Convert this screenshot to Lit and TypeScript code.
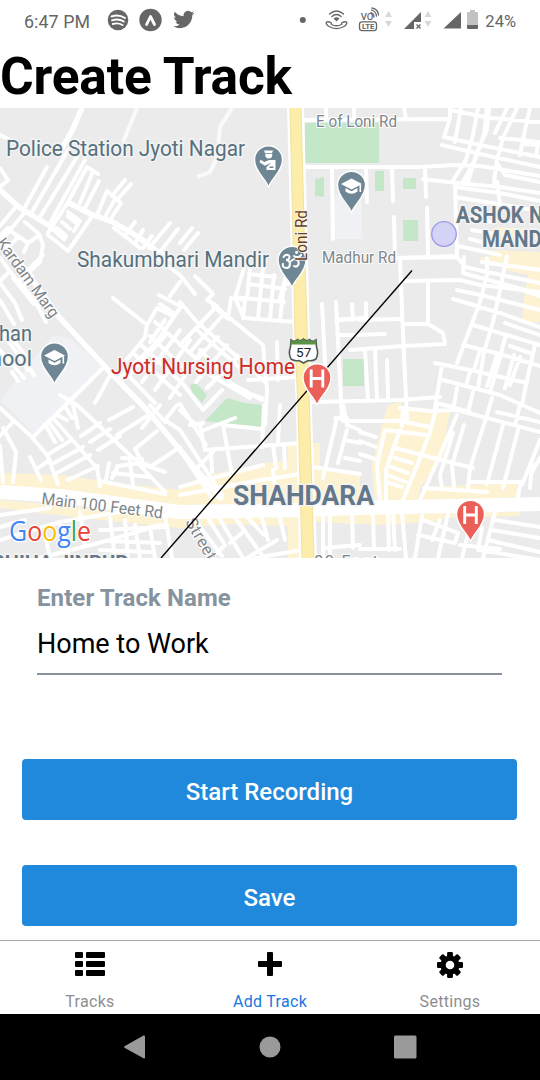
import { LitElement, html, svg, css } from "lit";
import { customElement } from "lit/decorators.js";

const MINOR_ROADS = [
  // north-west
  "M47 167L25 207M68 150L32 212M77 157L40 217M85 160L50 223M0 135L10 140M0 168L8 180M0 187L7 181",
  "M87 167L68 202L48 233M87 167L98 174M92 174L80 203M99 181L85 208M107 191L97 215M107 191L121 203L110 220M125 180L112 196M131 184L117 200M115 199L106 215",
  "M93 215L68 251L48 235M68 216L76 223M62 222L70 229M57 228L66 236M68 212L80 221L74 231M25 222L39 234L43 245L40 262L20 280M25 212L0 242M15 208L0 226",
  "M8 228L0 236M12 232L28 243L24 252M18 237L6 250M28 243L38 236M135 222L126 234M143 230L136 242M152 236L143 248M170 223L149 248M178 229L160 252M114 228L140 248",
  "M192 228L180 243M198 233L184 250",
  // north-east
  "M303 120L447 119M404 108L406 119M303 167L360 167L420 167L455 165L480 166L540 176M332 168L333 239M366 168L367 202M392 168L393 201M425 168L426 197M427 208L428 256M394 217L395 258L457 256L455 183",
  "M326 108L326 119M354 108L354 119",
  "M450 108L450 118L444 137L480 145L540 157M442 145L480 154L540 167M461 108L458 125L455 142M478 108L473 135L466 160L452 182M487 108L484 135L475 160L463 182M507 108L495 133M489 108L487 130L477 152L468 182M517 108L503 138L497 160L494 182M530 108L525 130L520 155M450 110L490 118L540 122M500 138L540 142M524 144L538 145L536 156",
  "M423 179L457 183L500 187L540 193M455 187L500 193L540 201M455 197L540 211M497 163L505 175L540 182M470 218L492 222M472 230L495 234M470 239L500 247M458 246L500 255M497 182L500 205",
  // west
  "M0 258L12 274L35 301L46 322M13 255L32 276M32 276L22 289M43 255L28 270M0 283L15 303L22 320M0 300L14 324M8 273L0 281M13 278L34 304M0 330L20 357L28 370M0 350L24 378M13 340L25 355M28 365L34 375M12 372L18 381",
  "M160 260L180 275M180 282L170 296M159 295L180 306M113 298L147 325L157 308L173 316M147 325L145 337L125 362M160 304L173 313M180 308L155 344L120 378M165 320L150 342M112 372L95 403M140 344L180 381M133 353L180 395M150 336L188 372M125 372L155 403M165 336L130 374M180 330L142 382M190 340L155 390M202 350L170 398M155 322L200 362",
  // centre
  "M180 275L195 294M195 276L213 294L207 300L217 306L180 345M180 302L197 322L258 375L265 382M215 306L263 345L267 390L265 425M223 315L190 352M243 318L245 300L234 298M231 298L228 319L213 306",
  "M244 268L235 298L244 318L295 322M250 268L247 298M263 268L258 318M274 275L270 319M285 278L280 319M235 297L284 302M248 284L285 289M249 274L275 277M285 284L297 283M277 342L278 380M248 380L297 377M285 280L280 298",
  "M197 330L240 368M205 372L250 398M183 384L203 410L222 390M200 350L232 384L262 400M218 337L185 372M227 345L196 382M238 356L207 388M262 398L240 390M180 410L196 425",
  // east
  "M400 258L457 257L465 267L487 272L540 283M405 281L460 280L480 285L540 292M428 282L428 323M403 324L428 324L443 333L445 344L403 346L350 350M360 320L400 319M340 320L365 318M352 335L385 334M366 303L366 320M400 258L402 310L407 420M322 304L326 380M336 302L342 420M336 320L362 318M340 335L358 335M352 304L353 320M365 350L368 400M375 350L377 400M387 360L388 398M312 402L400 400L440 397",
  "M487 258L487 275L480 302L457 363M507 256L500 290L493 322L484 352L478 388M463 273L540 294M457 290L485 296L540 310M453 299L500 313L540 327M473 325L540 345M463 345L500 354L540 366M435 363L475 371L527 383M443 380L500 395L540 413M442 365L435 408M535 345L527 380L522 405M505 338L498 365L490 392M520 357L510 385M514 355L505 388M497 355L487 386M480 350L474 370M470 372L466 386M505 323L540 335M510 346L530 353M457 388L454 405M473 392L468 412M492 398L486 418M437 403L470 412",
  "M464 257L463 273M482 262L540 270M510 286L540 296",
  // south-west
  "M0 408L30 435L47 455L58 484M103 368L33 437M60 395L77 405L133 458L165 492M53 418L97 468L100 486M47 455L70 441M52 464L83 447M57 473L90 455M68 480L98 466M72 400L78 428M66 408L72 418M45 424L55 442M48 421L62 440M57 415L67 420M81 436L100 423M90 442L110 429M98 450L120 436M109 420L133 407M117 435L150 414M135 449L157 431M135 449L144 465L165 472M153 465L180 447M142 428L160 405M150 405L165 422M177 405L165 420L180 430M0 436L13 422M3 428L16 452L13 482M0 446L3 482M30 457L41 480M38 468L50 460M117 466L143 463L153 467M113 473L150 477M109 463L106 480M118 466L112 478M122 458L142 459M130 462L133 485M100 481L165 494",
  // south centre
  "M180 430L222 495M180 404L206 445M200 425L205 450L300 443M223 425L232 475M211 450L212 472M204 430L235 418M264 405L262 447M280 405L278 443M273 445L276 468M284 445L285 468M180 495L262 480L300 474M180 487L205 480L263 465M213 452L195 470M223 425L262 429M273 470L275 487M180 450L212 498M190 425L203 423",
  "M208 518L225 545M218 516L243 558M234 516L264 558M248 518L264 535M262 518L268 540M280 518L285 540M277 540L247 558M302 550L255 558M230 543L243 532M217 553L225 545M195 520L222 556",
  "M337 418L323 478M313 467L360 474M343 405L347 425L360 430M338 463L347 430M360 443L345 440M345 458L360 461M335 418L347 418M323 514L323 558M330 514L330 558M352 514L353 548M323 548L360 545",
  // south-east
  "M343 421L400 421L430 427M437 405L430 432L420 458L403 500M457 415L440 455L420 500M400 408L430 411L457 410L540 432M488 412L470 468L468 488M503 425L487 484M518 430L503 488M540 440L522 485M395 448L473 468M385 430L377 465L380 500M385 430L427 435M400 430L386 470L386 500M453 433L440 475L442 488M464 425L452 465L454 488M424 488L487 492M470 482L520 482M395 458L412 463M391 467L408 473M388 475L406 482M386 482L402 487M360 441L376 447M360 454L375 459M532 464L530 488M540 458L532 472M360 432L376 437M497 412L540 422M520 405L515 425M403 410L402 426M520 485L518 497",
  "M402 514L406 558M422 516L415 558M448 514L438 558M495 512L483 558M423 520L458 533L455 543L418 535M440 520L432 540M495 520L540 527M492 530L540 538M488 540L540 552M480 550L540 560M460 545L500 549M373 514L374 548M388 514L389 550M393 514L395 550M360 549L400 549M482 528L478 550M467 538L462 558",
  // south-west corner
  "M0 515L50 508M0 540L60 522L120 512M40 558L110 540L160 525M110 518L115 558M125 520L128 558M135 525L140 558M150 527L155 558M100 530L165 527M108 541L160 543M100 550L150 552M60 524L70 558M165 515L172 558M150 527L165 525M0 527L25 520M80 512L85 545M45 535L50 558",
];

const pin = (x: number, y: number, fill: string, glyph: unknown) => svg`
  <g transform="translate(${x} ${y})">
    <path d="M0 27C-1.600 19-14-11.800 -14-.7M0 27C-1.800 19-14 11.500-14-.8A14 14 0 0 1 14-.8C14 11.500 1.800 19 0 27Z"
      fill=${fill} stroke="none"/>
    <path d="M0 27C-1.800 19-14 11.500-14-.8A14 14 0 0 1 14-.8C14 11.500 1.800 19 0 27Z"
      fill=${fill} stroke="#fff" stroke-width="1.400"/>
    ${glyph}
  </g>`;

const CAP = svg`<path d="M0-7.500L10.500-2L0 3.500L-10.500-2ZM-6 2L0 5.200L6 2V5.500Q0 10-6 5.500ZM8-1H9.600V6H8Z" fill="#fff"/>`;
const GUARD = svg`<path d="M-4.500-10H4.500L3.500-7.300H-3.500ZM-3.300-6.500H3.800Q4-2 .3-2T-3.300-6.500ZM.5-.5H7V9.500H-2V6.500L3 2L-3.500 5.200L-9 1.800L-8-.7L-4 1.500ZM1 7.500H5V6H1Z" fill="#fff"/>`;
const HOSPITAL = svg`<path d="M-5.800-9V9M5.800-9V9M-5.800 0H5.800" stroke="#fff" stroke-width="2.900" fill="none"/>`;
const OM = svg`<path d="M-8.500-4C-6-8-1-6-3-2.500C-4-1-6-1-6-1C-1-1-1 6-5 7C-8 7.500-10 5-9 3M-2 1C2-3 4-3 6 0S5 7 2 5M2-5C5-3 8-4 9-6" stroke="#fff" stroke-width="2" fill="none" stroke-linecap="round"/><circle cx="4.500" cy="-8.500" r="1.400" fill="#fff"/>`;

@customElement("track-map")
class TrackMap extends LitElement {
  static styles = css`
    :host { display: block; height: 450px; overflow: hidden; }
    svg { display: block; }
    text { font-family: Roboto, sans-serif; paint-order: stroke; stroke: #f4f4f4; stroke-width: 3px; stroke-linejoin: round; }
    .poi { font-size: 22px; fill: #56707d; }
    .poi-red { font-size: 22px; fill: #cf2a26; }
    .road { font-size: 16.5px; fill: #80858a; stroke: #fff; stroke-width: 2px; }
    .area { font-weight: 700; fill: #64788a; }
    .logo { font-family: "Open Sans", Roboto, sans-serif; font-size: 28px; font-weight: 500; stroke: #fff; stroke-width: 2.5px; }
    .minor { fill: none; stroke: #fff; stroke-width: 4px; stroke-linejoin: round; stroke-linecap: round; }
  `;
  render() {
    return html`<svg width="540" height="450" viewBox="0 108 540 450">
      <rect y="108" width="540" height="450" fill="#ebebeb" />
      <path fill="#eff1f4" d="M0 400L53 335L70 338L103 368L70 405L33 433ZM335 195H362V239H335Z" />
      <path fill="#fdf3d3" d="M388 405L450 412L447 425L445 455L437 465L420 488L418 500L375 502L372 465L382 425ZM423 487L517 483V497L423 502ZM287 443H320V468L360 472V502L180 505V490L200 477L265 463L288 460ZM0 473L60 475L133 485L180 490V508L120 500L0 487ZM0 500L60 505L180 518L300 516V558H288V526L230 524L180 528L100 520L0 508ZM315 515L440 511L520 512V516L440 518V521L385 525L315 522ZM480 257H540V271L482 264ZM508 267L540 272V322H522L524 300L528 275L506 270ZM497 227L540 230V240L497 236ZM492 250L540 252V258H490ZM391 404L402 402V412H390Z" />
      <path fill="#c4e7c7" d="M305 123H379V163H305ZM315 179L324 177V197L315 196ZM375 171H384V191H375ZM403 178H416V189H403ZM403 220H418V241H403ZM343 359H364V386H343ZM190 385L196 383L207 395L202 403L192 392ZM205 421L227 398L245 403L264 405L263 427L240 429L236 425Z" />
      <path class="minor" d=${MINOR_ROADS.join("")} />
      <path fill="none" stroke="#fff" stroke-width="5.500" stroke-linejoin="round"
        d="M82 108L72 131L60 152M0 190L20 208L50 226L66 240M67 202L93 215L113 222L140 238L155 250L180 264M0 236L60 318L110 372L147 410L180 450L222 500" />
      <path fill="none" stroke="#fafafa" stroke-width="4" d="M137 108L123 142M232 108L220 127L217 158L210 172L197 177" />
      <path fill="none" stroke="#fff" stroke-width="14" stroke-linejoin="round" d="M0 492L60 496L180 512L300 510L360 508L540 504" />
      <path fill="#fff" d="M287 108H304L308 260L310 340L312 410L317 558H299L296 410L293 340L291 260Z" />
      <path fill="#fcedab" stroke="#f0dc96" stroke-width=".8" d="M290 107H301L305 260L307.500 340L309.500 410L314 559H302L298 410L295 340L293.500 260Z" />
      <circle cx="444" cy="234" r="12.300" fill="#d5d3f5" stroke="#9b98e8" stroke-width="1.300" />

      <text class="road" x="316" y="127" textLength="81" lengthAdjust="spacingAndGlyphs">E of Loni Rd</text>
      <text class="road" x="322" y="263" textLength="74" lengthAdjust="spacingAndGlyphs">Madhur Rd</text>
      <text class="road" transform="translate(-4 243) rotate(54)" textLength="94" lengthAdjust="spacingAndGlyphs">Kardam Marg</text>
      <text class="road" transform="translate(41 504) rotate(6.800)" textLength="122" lengthAdjust="spacingAndGlyphs">Main 100 Feet Rd</text>
      <text class="road" transform="translate(185 522) rotate(60)" textLength="72">Street No</text>
      <text class="road" x="314" y="567" textLength="64">80 Feet</text>
      <text class="area" x="-8" y="570" font-size="20" textLength="136" lengthAdjust="spacingAndGlyphs">BHIHA JINPUR</text>
      <text class="area" x="233" y="505" font-size="27" textLength="141" lengthAdjust="spacingAndGlyphs">SHAHDARA</text>
      <text class="area" x="456" y="223" font-size="23" textLength="115" lengthAdjust="spacingAndGlyphs">ASHOK NAG</text>
      <text class="area" x="482" y="247" font-size="23" textLength="74" lengthAdjust="spacingAndGlyphs">MANDO</text>
      <text class="poi" x="6" y="156" textLength="239" lengthAdjust="spacingAndGlyphs">Police Station Jyoti Nagar</text>
      <text class="poi" x="77" y="267" textLength="192" lengthAdjust="spacingAndGlyphs">Shakumbhari Mandir</text>
      <text class="poi" x="-1" y="341" textLength="33" lengthAdjust="spacingAndGlyphs">han</text>
      <text class="poi" x="-10" y="366" textLength="42" lengthAdjust="spacingAndGlyphs">hool</text>

      <path d="M412 270.500L161 558" stroke="#000" stroke-width="1.400" />

      ${pin(268.5, 160.5, "#6f8794", GUARD)}
      ${pin(351.5, 186, "#6f8794", CAP)}
      ${pin(54.5, 357.5, "#6f8794", CAP)}
      ${pin(292, 261, "#6f8794", OM)}
      <text transform="translate(307 261) rotate(-90)" font-size="16" style="fill:#6b3d1b;stroke-width:1.500px" textLength="51" lengthAdjust="spacingAndGlyphs">Loni Rd</text>
      <text class="poi-red" x="111" y="374" textLength="184" lengthAdjust="spacingAndGlyphs">Jyoti Nursing Home</text>

      <path d="M291 340Q295 343 297.500 339.500Q300.500 342 303.500 339Q306.500 342 309.500 339.500Q312 343 316 340L316.500 347Q319 353 316 359Q312 361.500 308 360.500L303.500 363L299 360.500Q295 361.500 291 359Q288 353 290.500 347Z" fill="#fff" stroke="#4d5b55" stroke-width="1.600" />
      <path d="M291 340Q295 343 297.500 339.500Q300.500 342 303.500 339Q306.500 342 309.500 339.500Q312 343 316 340L316.500 344.500H290.500Z" fill="#589442" />
      <text x="303.700" y="357" font-size="13.500" text-anchor="middle" fill="#222" style="stroke:none">57</text>
      ${pin(317, 378.5, "#ea5f58", HOSPITAL)}
      ${pin(470.5, 515, "#ea5f58", HOSPITAL)}
      <text class="logo" x="9" y="541" textLength="82" lengthAdjust="spacingAndGlyphs"><tspan fill="#4285f4">G</tspan><tspan fill="#ea4335">o</tspan><tspan fill="#fbbc05">o</tspan><tspan fill="#4285f4">g</tspan><tspan fill="#34a853">l</tspan><tspan fill="#ea4335">e</tspan></text>
    </svg>`;
  }
}

@customElement("app-root")
class AppRoot extends LitElement {
  static styles = css`
    :host { display: flex; flex-direction: column; width: 540px; height: 1080px; overflow: hidden; background: #fff; color: #000; font-family: Roboto, sans-serif; }
    svg { display: block; }
    .status { display: flex; align-items: center; justify-content: space-between; height: 40px; padding: 2px 24px 0; box-sizing: border-box; color: #666; font-size: 17.8px; flex: none; }
    .left { display: flex; align-items: center; }
    .status svg { margin-top: -2px; }
    .clock { width: 83px; letter-spacing: .1px; }
    .pct { font-size: 16.5px; margin-left: 6px; }
    h1 { margin: 0; height: 68px; line-height: 73px; font-size: 51.5px; font-weight: 700; letter-spacing: -.2px; white-space: nowrap; flex: none; }
    track-map { flex: none; }
    form { flex: 1; min-height: 0; display: flex; flex-direction: column; padding: 22px 23px 0 22px; margin: 0; }
    .field { flex: none; box-sizing: border-box; margin: 0 15px 84px; display: flex; flex-direction: column; border-bottom: 2px solid #86939e; height: 95px; }
    label { color: #86939e; font-size: 24px; font-weight: 700; line-height: 36px; letter-spacing: .1px; white-space: nowrap; }
    .value { font-size: 27px; line-height: 57px; white-space: nowrap; }
    .btn { flex: none; display: flex; align-items: center; justify-content: center; height: 61px; padding: 4px 0 0; box-sizing: border-box; margin: 0; background: #2089dc; color: #fff; border: 0; border-radius: 4px; font: 500 24px Roboto, sans-serif; }
    .btn + .btn { margin-top: 45px; }
    .tabs { display: grid; grid-template-columns: repeat(3, 1fr); height: 73px; border-top: 1px solid #a7a7a7; flex: none; }
    .tab { display: flex; flex-direction: column; align-items: center; padding-top: 8px; color: #8e8e8f; font-size: 16px; letter-spacing: .3px; }
    .tab svg { margin-bottom: 12px; }
    .active { color: #1877e0; }
    .nav { display: flex; justify-content: center; align-items: center; gap: 112px; height: 66px; background: #000; flex: none; }
  `;
  render() {
    return html`
      <div class="status">
        <div class="left">
          <span class="clock">6:47 PM</span>
          <svg width="90" height="24" viewBox="107 8 90 24">
            <circle cx="118" cy="20" r="10.300" fill="#666" />
            <path d="M111.500 16.500Q118.500 14 125 18M112 20.300Q118.500 18.300 123.800 21.500M112.800 24Q118 22.400 122.500 25" fill="none" stroke="#fff" stroke-width="1.900" stroke-linecap="round" />
            <circle cx="150.500" cy="20" r="11.200" fill="#666" />
            <path d="M146.600 24.500L150.500 16.500L154.500 24.500" fill="none" stroke="#fff" stroke-width="2.800" stroke-linejoin="round" stroke-linecap="round" />
            <path transform="translate(173.300 9) scale(.88)" d="M23.950 4.570a10 10 0 0 1-2.820.770 4.960 4.960 0 0 0 2.160-2.720c-.950.550-2 .950-3.120 1.180a4.920 4.920 0 0 0-8.380 4.480C7.690 8.090 4.070 6.130 1.640 3.160a4.900 4.900 0 0 0 1.520 6.570 4.900 4.900 0 0 1-2.230-.610v.060a4.920 4.920 0 0 0 3.950 4.830 5 5 0 0 1-2.210.080 4.940 4.940 0 0 0 4.600 3.420A9.870 9.870 0 0 1 0 19.540a14 14 0 0 0 7.550 2.210c9.050 0 14-7.500 14-13.980 0-.210 0-.420-.020-.630a9.940 9.940 0 0 0 2.460-2.550z" fill="#666" />
          </svg>
        </div>
        <div class="left">
          <svg width="180" height="26" viewBox="299 7 180 26">
            <circle cx="302.800" cy="20" r="3" fill="#666" />
            <g fill="none" stroke="#666" stroke-width="1.300" stroke-linecap="round">
              <path d="M329.500 14Q336.500 8 343.500 14M331.800 16.500Q336.500 12.500 341.200 16.500" />
              <path d="M326.300 22.200Q328.300 21 331.300 23L331.500 24.500Q336.500 27 341.500 24.500L341.700 23Q344.700 21 346.700 22.200Q347.300 24 344.500 26.300Q336.500 31 328.500 26.300Q325.700 24 326.300 22.200Z" />
              <rect x="359.500" y="21.800" width="17" height="8.800" rx="2.500" />
              <path d="M371 12.500Q374 14 374 17M371.500 10Q376 11.500 376.500 16M372 8Q378 9 378.500 15" />
            </g>
            <path d="M333.500 18.500Q336.500 16 339.500 18.500L336.500 21.500Z" fill="#666" />
            <text x="360.700" y="20.300" font-size="9.500" font-weight="500" fill="#666">VO</text>
            <text x="362" y="29.200" font-size="7.800" font-weight="700" fill="#666" textLength="12.500">LTE</text>
            <path d="M385 17L388.500 11L392 17ZM385 21H392L388.500 27ZM424.500 17L428 11L431.500 17ZM424.500 21H431.500L428 27Z" fill="#d8d8d8" />
            <path d="M421 12V22H414V29H404ZM461 12V28.500H443.500Z" fill="#666" />
            <path d="M416.500 24.500L420.500 28.500M420.500 24.500L416.500 28.500" stroke="#666" stroke-width="1.300" />
            <path d="M467 13Q467 12 468 12H470V10H475V12H477Q478 12 478 13V25H467Z" fill="#c2c2c2" />
            <path d="M467 25H478V28Q478 29 477 29H468Q467 29 467 28Z" fill="#666" />
          </svg>
          <span class="pct">24%</span>
        </div>
      </div>
      <h1>Create Track</h1>
      <track-map></track-map>
      <form>
        <div class="field"><label>Enter Track Name</label><span class="value">Home to Work</span></div>
        <button class="btn" type="button">Start Recording</button>
        <button class="btn" type="button">Save</button>
      </form>
      <div class="tabs">
        <div class="tab">
          <svg width="30" height="31" viewBox="75 949 30 31"><path d="M76 952H82Q83 952 83 953V957Q83 958 82 958H76Q75 958 75 957V953Q75 952 76 952ZM87 952H104Q105 952 105 953V957Q105 958 104 958H87Q86 958 86 957V953Q86 952 87 952ZM76 961H82Q83 961 83 962V966Q83 967 82 967H76Q75 967 75 966V962Q75 961 76 961ZM87 961H104Q105 961 105 962V966Q105 967 104 967H87Q86 967 86 966V962Q86 961 87 961ZM76 970H82Q83 970 83 971V975Q83 976 82 976H76Q75 976 75 975V971Q75 970 76 970ZM87 970H104Q105 970 105 971V975Q105 976 104 976H87Q86 976 86 975V971Q86 970 87 970Z" /></svg>
          <span>Tracks</span>
        </div>
        <div class="tab active">
          <svg width="24" height="31" viewBox="258 949 24 31"><path d="M268 952H272Q273 952 273 953V961H281Q282 961 282 962V966Q282 967 281 967H273V975Q273 976 272 976H268Q267 976 267 975V967H259Q258 967 258 966V962Q258 961 259 961H267V953Q267 952 268 952Z" fill="#000" /></svg>
          <span>Add Track</span>
        </div>
        <div class="tab">
          <svg width="26" height="31" viewBox="-13 -16 26 31">
            ${[0, 45, 90, 135].map((a) => svg`<rect x="-2.900" y="-13" width="5.800" height="26" rx="1.200" transform="rotate(${a})"/>`)}
            <circle r="9.600" /><circle r="4.300" fill="#fff" />
          </svg>
          <span>Settings</span>
        </div>
      </div>
      <div class="nav">
        <svg width="24" height="24" viewBox="0 0 24 24"><path d="M1.500 11.300L20.500 .5Q22 0 22 1.500V22.500Q22 24 20.500 23.300L1.500 12.700Q.5 12 1.500 11.300Z" fill="#9a9a9a" /></svg>
        <svg width="22" height="22" viewBox="0 0 22 22"><circle cx="11" cy="11" r="10.500" fill="#9a9a9a" /></svg>
        <svg width="24" height="24" viewBox="0 0 24 24"><rect x="1" y=".5" width="22.500" height="23" rx="1.500" fill="#9a9a9a" /></svg>
      </div>
    `;
  }
}
